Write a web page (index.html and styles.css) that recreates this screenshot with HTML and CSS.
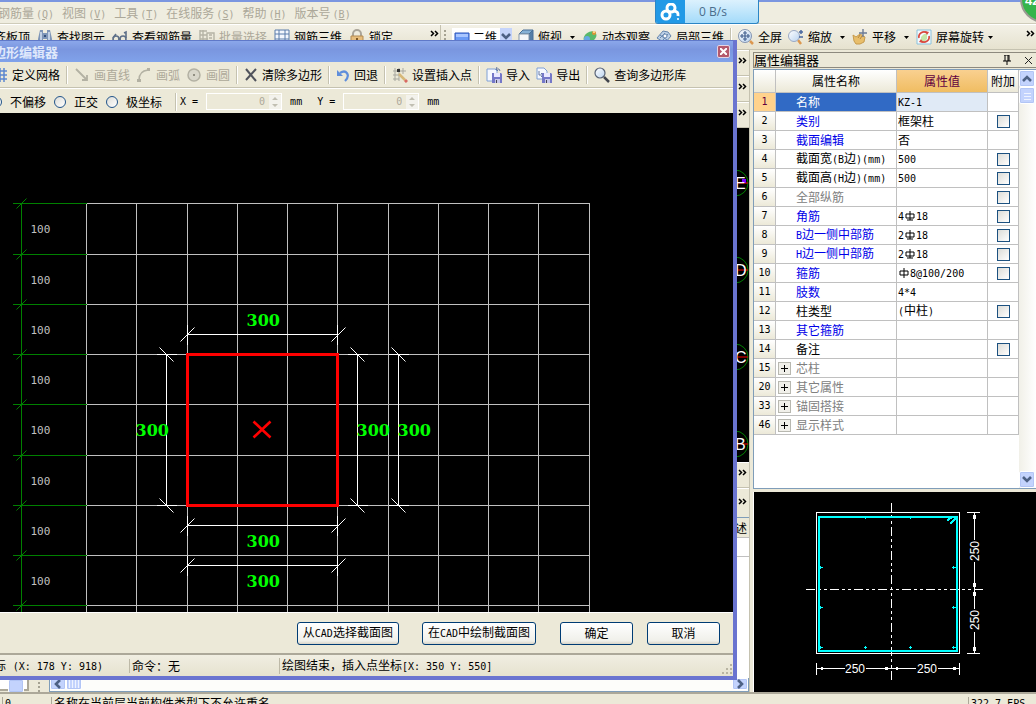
FILE: index.html
```html
<!DOCTYPE html>
<html lang="zh-CN">
<head>
<meta charset="utf-8">
<title>多边形编辑器</title>
<link rel="stylesheet" href="styles.css">
</head>
<body>
<svg class="defs" aria-hidden="true">
  <defs>
    <linearGradient id="lens" x1="0" y1="0" x2="1" y2="1"><stop offset="0" stop-color="#fff"/><stop offset="1" stop-color="#b9d3f0"/></linearGradient>
    <symbol id="i-drop" viewBox="0 0 5 3"><path d="M0 0h5L2.500 3z"/></symbol>
    <symbol id="i-more" viewBox="0 0 9 7"><path d="M1 1l2.500 2.500L1 6M5 1l2.500 2.500L5 6" fill="none" stroke="#000" stroke-width="1.500"/></symbol>
    <symbol id="i-chev-d" viewBox="0 0 10 8"><path d="M1 1l4 4 4-4" fill="none" stroke="#4d6185" stroke-width="2.600"/></symbol>
    <symbol id="i-disk" viewBox="0 0 10 10"><path d="M0 0h9l1 1v9H0z" fill="#7478c8"/><path d="M2 0h6v4H2z" fill="#e8e8ff"/><path d="M3 6h5v4H3z" fill="#c8c8ea"/><path d="M4 7h1v3H4z" fill="#445"/></symbol>
  </defs>
</svg>

<nav class="menubar">
  <button class="menu">钢筋量<span class="m">(<u>Q</u>)</span></button>
  <button class="menu">视图<span class="m">(<u>V</u>)</span></button>
  <button class="menu">工具<span class="m">(<u>T</u>)</span></button>
  <button class="menu">在线服务<span class="m">(<u>S</u>)</span></button>
  <button class="menu">帮助<span class="m">(<u>H</u>)</span></button>
  <button class="menu">版本号<span class="m">(<u>B</u>)</span></button>
</nav>

<div class="toolbar">
  <div class="tools tools-edit">
    <button class="tool">平齐板顶</button>
    <button class="tool"><svg class="icon" viewBox="0 0 16 16"><path d="M3 1h3v3h4V1h3l2 9v4h-5v-4H6v4H1v-4z" fill="#7e95b8"/><path d="M4 3v8M12 3v8" stroke="#d7e3f4" stroke-width="1.500"/><path d="M7 6h2v2H7z" fill="#33507d"/></svg>查找图元</button>
    <button class="tool"><svg class="icon" viewBox="0 0 16 16"><g fill="none" stroke="#5d6f88" stroke-width="1.600"><circle cx="4" cy="10" r="3"/><circle cx="11" cy="10" r="3"/><path d="M7 10h1M14 9V3l-2 1M1 9L4 5"/></g></svg>查看钢筋量</button>
    <button class="tool" disabled><svg class="icon" viewBox="0 0 16 16"><path d="M1 1v13M4 1v13M1 2h7M1 6h7M1 10h8M8 4h7v9H8zM10 6h3M10 9h3" fill="none" stroke="#b5b3a5" stroke-width="1.400"/></svg>批量选择</button>
    <button class="tool"><svg class="icon" viewBox="0 0 16 16"><path d="M1 1h14v13H1zM1 5h14M1 10h14M5 1v13M11 1v13" fill="#f3f7fd" stroke="#5a7cab"/></svg>钢筋三维</button>
    <button class="tool"><svg class="icon" viewBox="0 0 16 16"><path d="M4 7V5a4 4 0 0 1 8 0v2" fill="none" stroke="#aaa59a" stroke-width="2"/><path d="M2 7h12v8H2z" fill="#e7bd7c" stroke="#b48b52"/><path d="M8 9v3" stroke="#7d5726" stroke-width="2"/></svg>锁定</button>
    <button class="more" aria-label="更多"><svg width="9" height="7"><use href="#i-more"/></svg></button>
  </div>
  <div class="tools tools-view">
    <span class="grip"></span>
    <label class="combo"><svg class="icon" viewBox="0 0 16 16"><path d="M1 4h14v10H1z" fill="#6c9bf5" stroke="#2d55b8"/><path d="M2 5h12v3H2z" fill="#a9c6ff"/></svg><select aria-label="视图模式"><option>二维</option></select><span class="combo-arrow"><svg width="10" height="8"><use href="#i-chev-d"/></svg></span></label>
    <button class="tool"><svg class="icon" viewBox="0 0 16 16"><path d="M1 5l4-4h10l-4 4z" fill="#86b1d6" stroke="#486f97"/><path d="M11 5l4-4v10l-4 4z" fill="#557da6" stroke="#486f97"/><path d="M1 5h10v10H1z" fill="#f4f6f8" stroke="#8295a9"/></svg>俯视<svg class="drop"><use href="#i-drop"/></svg></button>
    <button class="tool"><svg class="icon" viewBox="0 0 16 16"><ellipse cx="8" cy="8" rx="7" ry="5" transform="rotate(-35 8 8)" fill="#59b96a"/><circle cx="12" cy="4" r="2" fill="#e09334"/><circle cx="5" cy="10" r="3" fill="#67a9e4"/><circle cx="12" cy="3" r="1" fill="#ffe9a0"/></svg>动态观察</button>
    <button class="tool"><svg class="icon" viewBox="0 0 16 16"><path d="M1 9l6-7 5 1 3 4-6 7z" fill="#bcd0e6" stroke="#6485ad"/><path d="M4 9l5-5M7 11l5-6M4 6l7 5" stroke="#6485ad"/><circle cx="9" cy="7" r="2" fill="#fff" stroke="#6485ad"/></svg>局部三维</button>
    <span class="sep"></span>
    <button class="tool"><svg class="icon" viewBox="0 0 16 16"><path d="M12 12l3 3" stroke="#dc9850" stroke-width="2.500"/><circle cx="7" cy="7" r="6.500" fill="url(#lens)" stroke="#8494b0"/><path d="M7 2v10M2 7h10M5 4h4M5 10h4M4 5v4M10 5v4" stroke="#44618f" stroke-width="1.200"/></svg>全屏</button>
    <button class="tool"><svg class="icon" viewBox="0 0 16 16"><path d="M10 11l3 4" stroke="#dc9850" stroke-width="2.500"/><circle cx="6" cy="7" r="5.500" fill="url(#lens)" stroke="#9aa9c4"/><path d="M11 3h4M13 1v4M11 8h4" stroke="#4a68a0" stroke-width="1.500"/></svg>缩放<svg class="drop"><use href="#i-drop"/></svg></button>
    <button class="tool"><svg class="icon" viewBox="0 0 16 16"><path d="M1 6l3 2 4-3 5 3-1 5-4 2H4L2 12z" fill="#e8be6b" stroke="#c69a4d"/><path d="M6 9l2-3M8 10l2-3" stroke="#b6883b"/><path d="M11 0v8M7 4h8" stroke="#6b7b96" stroke-width="1.400"/></svg>平移<svg class="drop"><use href="#i-drop"/></svg></button>
    <button class="tool tool-tight"><svg class="icon" viewBox="0 0 16 16"><path d="M1 1h14v14H1z" fill="#f5fafd" stroke="#8ac2dc"/><path d="M5 8l3-3h3v5l-3 3H5z" fill="#c6e6a8"/><path d="M3 9a5 5 0 0 1 8-5M13 7a5 5 0 0 1-8 5" fill="none" stroke="#d9483f" stroke-width="1.700"/><path d="M9 2l4 1-2 3zM7 14l-4-1 2-3z" fill="#d9483f"/></svg>屏幕旋转<svg class="drop"><use href="#i-drop"/></svg></button>
    <button class="more" aria-label="更多"><svg width="9" height="7"><use href="#i-more"/></svg></button>
  </div>
</div>

<main class="work">
  <div class="main-area">
    <div class="strip">
      <button class="strip-more" aria-label="更多"><svg width="9" height="7"><use href="#i-more"/></svg></button>
      <button class="strip-more" aria-label="更多"><svg width="9" height="7"><use href="#i-more"/></svg></button>
      <button class="strip-more" aria-label="更多"><svg width="9" height="7"><use href="#i-more"/></svg></button>
      <svg class="axes" width="14">
        <g transform="translate(0 -128)">
          <g fill="none" stroke="#008000"><circle cx="0" cy="183" r="13"/><circle cx="0" cy="270" r="13"/><circle cx="0" cy="357" r="13"/><circle cx="0" cy="444" r="13"/></g>
          <path d="M0 183h13M0 270h13M0 357h13M0 444h13" stroke="#f00"/>
          <path d="M7 179h4v4H7z" fill="#70f"/>
          <g class="axis-name"><text x="0" y="189">E</text><text x="0" y="276">D</text><text x="0" y="363">C</text><text x="0" y="450">B</text></g>
        </g>
      </svg>
      <button class="strip-more" aria-label="更多"><svg width="9" height="7"><use href="#i-more"/></svg></button>
      <button class="strip-more strip-last" aria-label="更多"><svg width="9" height="7"><use href="#i-more"/></svg></button>
      <div class="desc"><div class="desc-head">述</div><div class="desc-row"></div></div>
    </div>
    <div class="hscroll">
      <div class="mini"><span class="sb thumb-h"></span></div>
      <span class="grip"></span>
      <div class="track">
        <button class="sb" aria-label="向左"><svg width="10" height="10"><path d="M7 1L3 5l4 4" fill="none" stroke="#4d6185" stroke-width="2.600"/></svg></button>
        <span class="sb ribs"></span>
        <button class="sb end" aria-label="向右"><svg width="10" height="10"><path d="M3 1l4 4-4 4" fill="none" stroke="#4d6185" stroke-width="2.600"/></svg></button>
      </div>
    </div>
  </div>

  <aside class="side">
    <header class="side-title"><span>属性编辑器</span>
      <button class="plain" aria-label="固定"><svg width="8" height="10"><path d="M2 0v6M1 0h5M5 0v6M6 0v6M0 6h8M4 6v4" fill="none" stroke="#000"/></svg></button>
      <button class="plain" aria-label="关闭"><svg width="9" height="9"><path d="M1 1l7 7M8 1L1 8" stroke="#222"/></svg></button>
    </header>
    <div class="grid-box">
      <div class="grid-body">
      <table class="props">
        <colgroup><col class="c-no"><col class="c-name"><col class="c-val"><col class="c-add"></colgroup>
        <thead><tr><th></th><th>属性名称</th><th class="hot">属性值</th><th>附加</th></tr></thead>
        <tbody>
          <tr class="sel"><th>1</th><td>名称</td><td><span class="m">KZ-1</span></td><td></td></tr>
          <tr class="key"><th>2</th><td>类别</td><td>框架柱</td><td><input type="checkbox" aria-label="类别"></td></tr>
          <tr class="key"><th>3</th><td>截面编辑</td><td>否</td><td></td></tr>
          <tr><th>4</th><td>截面宽<span class="m">(B</span>边<span class="m">)(mm)</span></td><td><span class="m">500</span></td><td><input type="checkbox" aria-label="截面宽"></td></tr>
          <tr><th>5</th><td>截面高<span class="m">(H</span>边<span class="m">)(mm)</span></td><td><span class="m">500</span></td><td><input type="checkbox" aria-label="截面高"></td></tr>
          <tr class="off"><th>6</th><td>全部纵筋</td><td></td><td><input type="checkbox" aria-label="全部纵筋"></td></tr>
          <tr class="key"><th>7</th><td>角筋</td><td><span class="m">4</span><svg class="bar" viewBox="0 0 10 10"><path d="M1 3h8v4H1zM5 0v9M2 9h6"/></svg><span class="m">18</span></td><td><input type="checkbox" aria-label="角筋"></td></tr>
          <tr class="key"><th>8</th><td><span class="m">B</span>边一侧中部筋</td><td><span class="m">2</span><svg class="bar" viewBox="0 0 10 10"><path d="M1 3h8v4H1zM5 0v9M2 9h6"/></svg><span class="m">18</span></td><td><input type="checkbox" aria-label="B边一侧中部筋"></td></tr>
          <tr class="key"><th>9</th><td><span class="m">H</span>边一侧中部筋</td><td><span class="m">2</span><svg class="bar" viewBox="0 0 10 10"><path d="M1 3h8v4H1zM5 0v9M2 9h6"/></svg><span class="m">18</span></td><td><input type="checkbox" aria-label="H边一侧中部筋"></td></tr>
          <tr class="key"><th>10</th><td>箍筋</td><td><svg class="bar" viewBox="0 0 10 10"><path d="M1 3h8v4H1zM5 0v10"/></svg><span class="m">8@100/200</span></td><td><input type="checkbox" aria-label="箍筋"></td></tr>
          <tr class="key"><th>11</th><td>肢数</td><td><span class="m">4*4</span></td><td></td></tr>
          <tr><th>12</th><td>柱类型</td><td><span class="m">(</span>中柱<span class="m">)</span></td><td><input type="checkbox" aria-label="柱类型"></td></tr>
          <tr class="key"><th>13</th><td>其它箍筋</td><td></td><td></td></tr>
          <tr><th>14</th><td>备注</td><td></td><td><input type="checkbox" aria-label="备注"></td></tr>
          <tr class="off group"><th>15</th><td><div class="node"><button class="plus" aria-label="展开"></button>芯柱</div></td><td></td><td></td></tr>
          <tr class="off group"><th>20</th><td><div class="node"><button class="plus" aria-label="展开"></button>其它属性</div></td><td></td><td></td></tr>
          <tr class="off group"><th>33</th><td><div class="node"><button class="plus" aria-label="展开"></button>锚固搭接</div></td><td></td><td></td></tr>
          <tr class="off group"><th>46</th><td><div class="node"><button class="plus" aria-label="展开"></button>显示样式</div></td><td></td><td></td></tr>
        </tbody>
      </table>
      </div>
      <div class="vscroll">
        <button class="sb" aria-label="向上"><svg width="10" height="8"><path d="M1 6l4-4 4 4" fill="none" stroke="#4d6185" stroke-width="2.600"/></svg></button>
        <span class="sb ribs-v"></span>
        <button class="sb end" aria-label="向下"><svg width="10" height="8"><use href="#i-chev-d"/></svg></button>
      </div>
    </div>
    <svg class="preview" role="img" aria-label="截面预览">
      <g transform="translate(-754 -492.500)" fill="none" shape-rendering="crispEdges">
        <path d="M816.500 513h143v141h-143z" stroke="#fff"/>
        <path d="M891.500 503v177M806 590h177" stroke="#fff" stroke-dasharray="9 3 3 3 3 3"/>
        <path d="M819 517h138v134H819z" stroke="#0ff" stroke-width="2"/>
        <path d="M864 517h3M865.500 516v3M909 517h3M910.500 516v3M819 568h4M820.500 566v3M819 608h4M820.500 606v3M952 568h4M953.500 566v3M952 608h4M953.500 606v3M819 648h4M820.500 646v3M864 648h3M865.500 646v3M909 648h3M910.500 646v3M952 648h4M953.500 646v3" stroke="#0ff"/>
        <path d="M947 521l6-4M950 524l6-5" stroke="#0ff" stroke-width="2"/>
        <path d="M967 513h13M967 654h13M974.500 513v27M974.500 562v47M974.500 632v22M976 590h7M816.500 663v12M959.500 663v12M817 669h28M866 669h50M938 669h22" stroke="#fff"/>
        <path d="M973 515h3v4h-3zM973 583h3v4h-3zM973 592h3v4h-3zM973 647h3v4h-3zM818 669l5-2v4zM890 669l-5-2v4zM893 669l5-2v4zM958 669l-5-2v4z" fill="#fff"/>
      </g>
      <g class="pv-text"><text x="101" y="181">250</text><text x="173" y="181">250</text><text transform="translate(225 59) rotate(-90)">250</text><text transform="translate(225 128) rotate(-90)">250</text></g>
    </svg>
  </aside>
</main>

<footer class="statusbar m">
  <span class="s-zero">0</span>
  <span class="s-msg">名称在当前层当前构件类型下不允许重名</span>
  <span class="s-fps">322.7 FPS</span>
</footer>

<section class="dialog" role="dialog" aria-labelledby="dlg-title">
  <header class="dlg-title"><h1 id="dlg-title">多边形编辑器</h1><button class="close" aria-label="关闭"><svg width="7" height="7"><path d="M0 0l7 7M7 0L0 7" stroke="#fff" stroke-width="2"/></svg></button></header>
  <div class="dlg-tools">
    <button class="tool"><svg class="icon" viewBox="0 0 16 16"><path d="M4 1v14M8 1v14M12 1v14M1 4h14M1 8h14M1 12h14" stroke="#5b86cf" stroke-width="1.500"/></svg>定义网格</button>
    <span class="sep"></span>
    <button class="tool" disabled><svg class="icon" viewBox="0 0 16 16"><path d="M2 2l11 11M8 13h5V8" fill="none" stroke="#b3b1a3" stroke-width="1.800"/></svg>画直线</button>
    <button class="tool" disabled><svg class="icon" viewBox="0 0 16 16"><path d="M3 13Q3 4 12 3" fill="none" stroke="#b3b1a3" stroke-width="1.500"/><path d="M1 12h4v3H1zM11 1h3v3h-3z" fill="#b3b1a3"/></svg>画弧</button>
    <button class="tool" disabled><svg class="icon" viewBox="0 0 16 16"><circle cx="8" cy="8" r="6" fill="#d9d7cb" stroke="#b3b1a3" stroke-width="1.500"/><path d="M7 7h2v2H7z" fill="#918f82"/></svg>画圆</button>
    <span class="sep"></span>
    <button class="tool"><svg class="icon icon-s" viewBox="0 0 14 14"><path d="M2 1l10 12M12 1L2 12" fill="none" stroke="#50535c" stroke-width="2"/></svg>清除多边形</button>
    <span class="sep"></span>
    <button class="tool"><svg class="icon icon-s" viewBox="0 0 14 14"><path d="M4 5c6-4 11 2 5 8" fill="none" stroke="#5f8edb" stroke-width="2.200"/><path d="M1 2v6h6z" fill="#5f8edb"/></svg>回退</button>
    <span class="sep"></span>
    <button class="tool"><svg class="icon" viewBox="0 0 16 16"><path d="M3 1v13M7 1v13M11 1v6M1 4h13M1 8h8M1 12h6" stroke="#a7a79f"/><path d="M5 2h3v3H5z" fill="#333"/><path d="M7 7l6 6" stroke="#d6b878" stroke-width="2.500"/><path d="M13 13l2 2" stroke="#d86a62" stroke-width="3"/></svg>设置插入点</button>
    <span class="sep"></span>
    <button class="tool"><svg class="icon" viewBox="0 0 16 16"><path d="M1 2h8l2 2v10H1z" fill="#f6f9ff" stroke="#7fa0d6"/><path d="M14 4q0-3-4-2l1-2M10 2l2 2" fill="none" stroke="#667ba4"/><use href="#i-disk" x="6" y="6" width="10" height="10"/></svg>导入</button>
    <button class="tool"><svg class="icon" viewBox="0 0 16 16"><path d="M1 1h7l3 3v8H1z" fill="#f6f9ff" stroke="#7fa0d6"/><path d="M3 4v4h4M5 6l2 2-2 2" fill="none" stroke="#667ba4"/><use href="#i-disk" x="6" y="6" width="10" height="10"/></svg>导出</button>
    <span class="sep"></span>
    <button class="tool"><svg class="icon" viewBox="0 0 16 16"><path d="M10 10l5 5" stroke="#41454d" stroke-width="2.500"/><circle cx="6" cy="6" r="5" fill="url(#lens)" stroke="#596477" stroke-width="1.200"/></svg>查询多边形库</button>
  </div>
  <div class="dlg-coords">
    <label><input type="radio" name="mode">不偏移</label>
    <label><input type="radio" name="mode">正交</label>
    <label><input type="radio" name="mode">极坐标</label>
    <span class="sep"></span>
    <label class="m coord" for="cx">X =</label><span class="spin m"><input id="cx" value="0" disabled><svg width="12" height="14"><path d="M3 5l3-3 3 3zM3 9l3 3 3-3z" fill="#c1bfb2"/></svg></span><span class="m unit">mm</span>
    <label class="m coord" for="cy">Y =</label><span class="spin m"><input id="cy" value="0" disabled><svg width="12" height="14"><path d="M3 5l3-3 3 3zM3 9l3 3 3-3z" fill="#c1bfb2"/></svg></span><span class="m unit">mm</span>
  </div>
  <svg class="canvas" role="img" aria-label="多边形绘图区">
    <g transform="translate(0.500 -112.500)" fill="none">
      <g shape-rendering="crispEdges">
        <path stroke="#c0c0c0" d="M86 203V620M136 203V620M187 203V620M237 203V620M287 203V620M337 203V620M388 203V620M438 203V620M488 203V620M538 203V620M589 203V620M86 203H589M86 254H589M86 304H589M86 354H589M86 404H589M86 455H589M86 505H589M86 555H589M86 605H589"/>
        <path stroke="#008000" d="M21 203V620M12 203H86M12 254H86M12 304H86M12 354H86M12 404H86M12 455H86M12 505H86M12 555H86M12 605H86"/>
        <path stroke="#fff" d="M187 334H337M187 324V344M337 324V344M166 354V505M156 354H176M156 505H176M357 354V505M347 354H367M347 505H367M398 354V505M388 354H408M388 505H408M187 525H337M187 515V535M337 515V535M187 565H337M187 555V575M337 555V575"/>
      </g>
      <path stroke="#008000" d="M16 208l10-10M16 259l10-10M16 309l10-10M16 359l10-10M16 409l10-10M16 460l10-10M16 510l10-10M16 560l10-10M16 610l10-10"/>
      <path stroke="#fff" d="M180 341l14-14M331 341l14-14M180 532l14-14M331 532l14-14M180 572l14-14M331 572l14-14M159 347l14 14M159 498l14 14M350 347l14 14M350 498l14 14M391 347l14 14M391 498l14 14"/>
      <path d="M187 354h150v151H187z" stroke="#f00" stroke-width="3"/>
      <path d="M253 421l17 16M270 421l-17 16" stroke="#f00" stroke-width="2.600"/>
      <g class="ruler"><text x="30" y="232">100</text><text x="30" y="283">100</text><text x="30" y="333">100</text><text x="30" y="383">100</text><text x="30" y="433">100</text><text x="30" y="484">100</text><text x="30" y="534">100</text><text x="30" y="584">100</text></g>
      <g class="dims"><text x="246" y="325">300</text><text x="246" y="546">300</text><text x="246" y="586">300</text><text x="135" y="435">300</text><text x="356" y="435">300</text><text x="397" y="435">300</text></g>
    </g>
  </svg>
  <div class="dlg-actions">
    <button class="xp">从<span class="m">CAD</span>选择截面图</button>
    <button class="xp">在<span class="m">CAD</span>中绘制截面图</button>
    <button class="xp xp-w">确定</button>
    <button class="xp xp-w">取消</button>
  </div>
  <footer class="dlg-status">
    <span class="d-pos">坐标 <span class="m">(X: 178 Y: 918)</span></span>
    <span class="d-cmd">命令：无</span>
    <span class="d-msg">绘图结束，插入点坐标<span class="m">[X: 350 Y: 550]</span></span>
    <svg width="12" height="12"><path d="M9 0h2v2H9zM5 4h2v2H5zM9 4h2v2H9zM1 8h2v2H1zM5 8h2v2H5zM9 8h2v2H9z" fill="#b8b4a2"/></svg>
  </footer>
</section>

<div class="net"><span class="net-logo"><svg width="22" height="18"><g fill="none" stroke="#fff" stroke-width="3"><circle cx="11" cy="5" r="4"/><circle cx="6" cy="12" r="4"/><path d="M13 8q6 0 5 5"/></g><circle cx="18" cy="16" r="1" fill="#fff"/></svg></span><span class="net-speed">0 B/s</span></div>
<div class="ball">42</div>
</body>
</html>
```
FILE: styles.css
```css
* { box-sizing: border-box; }
html, body { height: 100%; }
body {
  margin: 0;
  position: relative;
  display: flex;
  flex-direction: column;
  overflow: hidden;
  background: #ece9d8;
  color: #000;
  font: 12px/14px "Noto Sans CJK SC", sans-serif;
}
button { margin: 0; padding: 0; border: 0; background: none; color: inherit; font: inherit; white-space: nowrap; }
svg { display: block; flex: none; }
.m { font-family: "DejaVu Sans Mono", "Noto Sans CJK SC", monospace; font-size: 10px; }
.defs { position: absolute; width: 0; height: 0; }

.menubar { flex: none; display: flex; gap: 8px; height: 24px; padding-top: 2px; border-top: 2px solid #7b96e0; border-bottom: 1px solid #cfccba; background: #efede0; color: #aca899; overflow: hidden; }
.menu { flex: none; }
.menu:first-child { margin-left: -2px; }
.menu .m { margin-left: 2px; }

.toolbar { flex: none; display: flex; height: 26px; border-top: 1px solid #fff; border-bottom: 1px solid #c5c2b0; background: linear-gradient(#f3f1e7, #e6e2cf); }
.tools { display: flex; align-items: center; gap: 7px; overflow: hidden; }
.tools-edit { flex: none; width: 441px; border-right: 1px solid #c5c2b0; }
.tools-edit .tool:first-child { margin-left: -18px; }
.tools-view { flex: 1; gap: 6px; padding-left: 3px; }
.tool { flex: none; display: flex; align-items: center; gap: 4px; }
.tool:disabled { color: #aca899; }
.icon { width: 16px; height: 16px; }
.icon-s { width: 14px; height: 14px; }
.drop { width: 5px; height: 3px; margin: 0 1px 0 4px; }
.tool-tight .drop { margin-left: 0; }
.more { flex: none; margin-left: auto; padding: 0 1px 8px 0; }
.sep { flex: none; width: 2px; height: 18px; border-left: 1px solid #c5c2b0; border-right: 1px solid #fff; }
.grip { flex: none; width: 2px; height: 14px; border-left: 2px dotted #a5a292; }
.combo { flex: none; display: flex; align-items: center; gap: 3px; width: 60px; height: 18px; padding-left: 2px; background: #fff; }
.combo select { flex: 1; min-width: 0; height: 18px; padding: 0; border: 0; background: none; font: inherit; color: inherit; appearance: none; }
.combo-arrow { display: flex; align-items: center; justify-content: center; width: 12px; height: 18px; background: #c5d4fb; }

.work { flex: 1; min-height: 0; display: flex; gap: 3px; }
.main-area { flex: 1; min-width: 0; display: flex; flex-direction: column; border-right: 1px solid #c5c2b0; }
.strip { flex: 1; min-height: 0; display: flex; flex-direction: column; align-items: flex-end; }
.strip-more { flex: none; width: 14px; height: 26px; border-bottom: 1px solid #c5c2b0; border-top: 1px solid #fff; display: flex; justify-content: center; padding-top: 6px; }
.axes { flex: 1; min-height: 0; background: #000; }
.axis-name { fill: #fff; font: 16px "Liberation Sans", sans-serif; }
.strip-last { border-bottom: 0; height: 29px; padding-top: 9px; }
.desc { flex: none; width: 14px; height: 161px; background: #fff; border-top: 1px solid #7f9db9; }
.desc-head { height: 20px; padding-top: 3px; border-bottom: 1px solid #c0c0c0; background: #ece9d8; }
.desc-row { height: 19px; border-bottom: 1px solid #c0c0c0; }
.hscroll { flex: none; display: flex; align-items: center; height: 14px; gap: 9px; background: #ece9d8; }
.mini { width: 29px; height: 12px; padding-left: 8px; background: #fff; border: 1px solid #aca899; border-width: 0 2px 2px 0; }
.track { flex: 1; display: flex; height: 14px; background: #fdfdfa; border: 1px solid #7f9db9; border-top: 0; }
.sb { flex: none; display: flex; align-items: center; justify-content: center; width: 16px; height: 14px; border: 1px solid #fff; border-radius: 2px; background: #c3d3fd; box-shadow: inset 0 0 0 1px #b2c5f5; }
.track .sb { height: 12px; }
.track .end { margin-left: auto; }
.ribs { background: repeating-linear-gradient(90deg, #c3d3fd 0 2px, #eef3ff 2px 3px); }

.side { flex: none; width: 283px; display: flex; flex-direction: column; }
.side-title { display: flex; align-items: center; gap: 13px; height: 16px; margin-top: 2px; padding-right: 3px; border: 1px solid #8d8a7e; border-right: 0; }
.side-title span { flex: 1; font-size: 13px; }
.grid-box { flex: 1; min-height: 0; display: flex; margin-top: 1px; border: 1px solid #7f9db9; border-right: 0; background: #fff; }
.grid-body { flex: 1; min-width: 0; overflow: hidden; }
.props { width: 100%; border-collapse: separate; border-spacing: 0; table-layout: fixed; }
.c-no { width: 22px; }
.c-val { width: 91px; }
.c-add { width: 31px; }
.props th, .props td { height: 19px; padding: 0; border-right: 1px solid #c0c0c0; border-bottom: 1px solid #c0c0c0; font-weight: 400; white-space: nowrap; line-height: 14px; }
.props thead th { height: 23px; background: linear-gradient(#fff, #ece9d8); }
.props thead .hot { background: linear-gradient(#f9d090, #f0bd62); color: #600040; }
.props tbody th { background: linear-gradient(#fff, #ece9d8); font-family: "DejaVu Sans Mono", monospace; font-size: 10px; }
.props td:nth-child(2) { padding-left: 20px; }
.props td:nth-child(3) { padding-left: 1px; }
.props td:nth-child(4) { text-align: center; }
.props .key td:nth-child(2) { color: #0000e8; }
.props .off td:nth-child(2) { color: #808080; }
.props .sel th { background: #ffd28c; color: #600040; }
.props .sel td:nth-child(2) { background: #316ac5; color: #fff; }
.props .sel td:nth-child(3) { background: #e0eaf6; }
.props .group td:nth-child(2) { padding-left: 2px; }
.props input { display: block; width: 13px; height: 13px; margin: 0 auto; border: 1px solid #1c5180; background: linear-gradient(135deg, #dcdcd7, #fff); appearance: none; }
.bar { display: inline-block; width: 10px; height: 10px; margin: 0 1px; vertical-align: -1px; fill: none; stroke: #000; }
.node { display: flex; align-items: center; gap: 5px; }
.plus { width: 13px; height: 13px; border: 1px solid #b8b8b0; background: linear-gradient(#000, #000) center / 7px 1px no-repeat, linear-gradient(#000, #000) center / 1px 7px no-repeat, #f1f0ea; }
.vscroll { flex: none; width: 17px; display: flex; flex-direction: column; background: linear-gradient(90deg, #f1f0e8, #fff); }
.vscroll .sb { height: 17px; }
.vscroll .end { margin-top: auto; }
.ribs-v { background: repeating-linear-gradient(#c3d3fd 0 2px, #eef3ff 2px 3px) center / 7px 9px no-repeat, #c3d3fd; }
.preview { width: 100%; height: 200px; margin-top: 3px; border-left: 1px solid #fff; background: #000; }
.pv-text { fill: #fff; font: 12px "Liberation Sans", sans-serif; text-anchor: middle; }

.statusbar { flex: none; display: flex; height: 12px; padding-left: 2px; border-top: 2px solid #aca899; line-height: 14px; overflow: hidden; white-space: nowrap; }
.statusbar span { flex: none; height: 14px; margin-top: 3px; padding-left: 2px; border-left: 1px solid #aca899; }
.s-zero { width: 49px; }
.statusbar .s-msg { flex: 1; font-size: 12px; }
.s-fps { width: 68px; }

.dialog { position: absolute; left: 0; right: 299px; top: 40px; bottom: 24px; display: flex; flex-direction: column; border: solid #6a74d0; border-width: 0 4px 4px 0; background: #ece9d8; overflow: hidden; }
.dlg-title { flex: none; display: flex; align-items: center; height: 22px; border-top: 1px solid #5f78c8; background: linear-gradient(#8ba7ea, #7a96df 40%, #80a2ea); color: #dfe8fb; }
.dlg-title h1 { flex: 1; margin: 0 0 0 -20px; font-size: 13px; line-height: 18px; }
.close { display: flex; align-items: center; justify-content: center; width: 13px; height: 13px; margin-right: 3px; border: 1px solid #e4d3e2; border-radius: 2px; background: #b4586c; }
.dlg-tools { flex: none; display: flex; align-items: center; gap: 6px; height: 26px; border-bottom: 1px solid #c5c2b0; }
.dlg-tools .tool:first-child { margin-left: -8px; }
.dlg-coords { flex: none; display: flex; align-items: center; gap: 8px; height: 25px; padding-top: 1px; border-top: 1px solid #fff; }
.dlg-coords label { flex: none; display: flex; align-items: center; gap: 8px; }
.dlg-coords label:first-child { margin-left: -10px; }
.dlg-coords input[type="radio"] { width: 12px; height: 12px; margin: 0; border: 1px solid #21548a; border-radius: 50%; background: linear-gradient(135deg, #dcdcd7, #fff); appearance: none; }
.dlg-coords .sep { margin-left: 5px; }
.dlg-coords .coord { margin-left: -5px; }
.unit { margin-right: 12px; }
.spin { flex: none; display: flex; align-items: center; width: 76px; height: 17px; border: 1px solid #fff; background: #ece9d8; }
.spin input { flex: 1; min-width: 0; padding: 0 4px 0 0; border: 0; background: none; color: #aca899; font: inherit; text-align: right; }
.spin svg { background: #f3f2ec; }
.canvas { flex: 1; min-height: 0; width: 100%; background: #000; }
.ruler { fill: #c0c0c0; font: 11px "DejaVu Sans Mono", monospace; }
.dims { fill: #00ff00; font: bold 16px "DejaVu Serif", serif; }
.dlg-actions { flex: none; display: flex; justify-content: flex-end; align-items: center; height: 41px; padding-right: 13px; border-top: 1px solid #fff; }
.xp { height: 23px; padding: 0 5px; border: 1px solid #003c74; border-radius: 3px; background: linear-gradient(#fff, #f0f0ea 85%, #d8d4c8); }
.xp + .xp { margin-left: 23px; }
.xp + .xp-w { width: 73px; margin-left: 24px; }
.xp + .xp-w:last-child { margin-left: 14px; }
.dlg-status { flex: none; display: flex; align-items: center; height: 23px; border-top: 2px solid #aca899; background: linear-gradient(#f0eee2, #e6e2cf); white-space: nowrap; }
.dlg-status > span { flex: none; }
.d-pos { width: 147px; margin-left: -18px; }
.d-pos .m { margin-left: 4px; }
.d-cmd { width: 150px; }
.dlg-status .d-cmd, .dlg-status .d-msg { padding-left: 2px; border-left: 1px solid #bdb9a7; }
.dlg-status .d-msg { flex: 1; }
.dlg-status svg { align-self: flex-end; }

.net { position: absolute; right: 277px; top: 0; display: flex; width: 104px; height: 24px; border: 1px solid #2c85c4; border-top: 0; border-radius: 0 0 3px 3px; background: linear-gradient(#dcf1fd, #a4dbfa); overflow: hidden; }
.net-logo { display: flex; align-items: center; justify-content: center; width: 29px; background: #2299e6; }
.net-speed { padding-left: 14px; font: 12px/24px "Open Sans", sans-serif; color: #4a6d8c; }
.ball { position: absolute; right: -32px; top: -25px; width: 48px; height: 48px; padding-left: 3px; border: 2px solid #9a9a92; border-radius: 50%; background: #35b44a; color: #fff; font: bold 13px/48px "Liberation Sans", sans-serif; }
```
